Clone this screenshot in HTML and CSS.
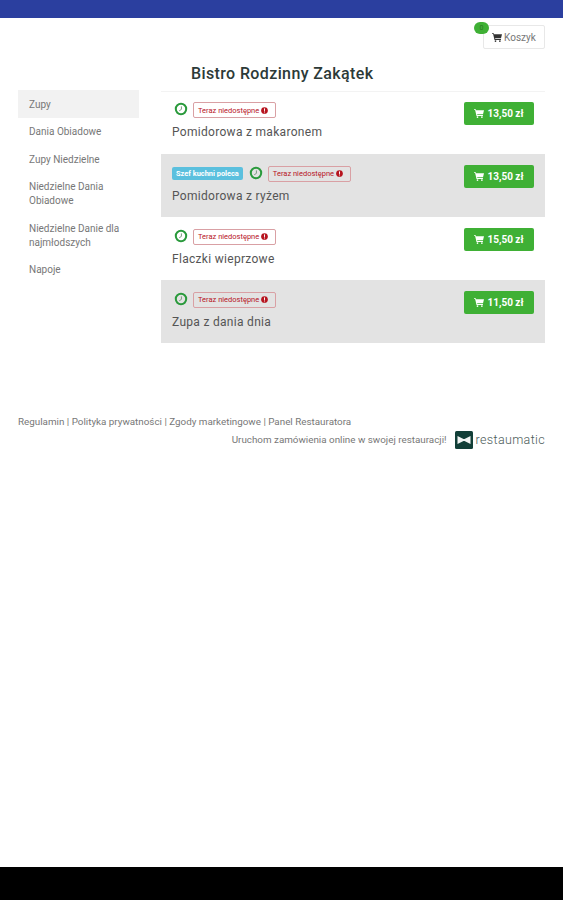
FILE: index.html
```html
<!DOCTYPE html>
<html lang="pl">
<head>
    <meta charset="UTF-8">
    <meta name="viewport" content="width=device-width, initial-scale=1.0">
    <title>Bistro Rodzinny Zakątek</title>
    <link rel="stylesheet" href="styles.css">
</head>
<body>
    <svg class="icon-defs" width="0" height="0">
        <symbol id="cart" viewBox="0 0 16 14">
            <path d="M0 0h2.8l.5 1.6H16l-1.6 6.6H5l.3 1.3h9v1.4H4L1.8 1.4H0z"/>
            <circle cx="5.6" cy="12.6" r="1.4"/>
            <circle cx="12.6" cy="12.6" r="1.4"/>
        </symbol>
        <symbol id="clock" viewBox="0 0 14 14">
            <circle cx="7" cy="7" r="5.2" fill="none" stroke="#2a9a3c" stroke-width="2"/>
            <path d="M7.4 4.4V7.4L5.2 8.8" fill="none" stroke="#7a9a80" stroke-width="1"/>
        </symbol>
        <symbol id="alert" viewBox="0 0 10 10">
            <circle cx="5" cy="5" r="4.8" fill="#b7141f"/>
            <rect x="4.3" y="2" width="1.4" height="3.6" fill="#fff"/>
            <rect x="4.3" y="6.4" width="1.4" height="1.4" fill="#fff"/>
        </symbol>
    </svg>

    <div class="top-bar"></div>

    <div class="page">
        <div class="cart-row">
            <a class="cart-btn" href="#">
                <span class="cart-count">0</span>
                <svg class="cart-icon"><use href="#cart"/></svg>Koszyk
            </a>
        </div>

        <h1 class="title">Bistro Rodzinny Zakątek</h1>

        <div class="content">
            <ul class="side-menu">
                <li class="active">Zupy</li>
                <li>Dania Obiadowe</li>
                <li>Zupy Niedzielne</li>
                <li>Niedzielne Dania Obiadowe</li>
                <li>Niedzielne Danie dla najmłodszych</li>
                <li>Napoje</li>
            </ul>

            <div class="dishes">
                <div class="dish">
                    <div class="dish-info">
                        <div class="dish-tags">
                            <svg class="clock"><use href="#clock"/></svg>
                            <span class="unavailable">Teraz niedostępne <svg class="alert"><use href="#alert"/></svg></span>
                        </div>
                        <div class="dish-name">Pomidorowa z makaronem</div>
                    </div>
                    <a class="price-btn" href="#"><svg class="cart-icon"><use href="#cart"/></svg>13,50 zł</a>
                </div>
                <div class="dish">
                    <div class="dish-info">
                        <div class="dish-tags">
                            <span class="chef">Szef kuchni poleca</span>
                            <svg class="clock"><use href="#clock"/></svg>
                            <span class="unavailable">Teraz niedostępne <svg class="alert"><use href="#alert"/></svg></span>
                        </div>
                        <div class="dish-name">Pomidorowa z ryżem</div>
                    </div>
                    <a class="price-btn" href="#"><svg class="cart-icon"><use href="#cart"/></svg>13,50 zł</a>
                </div>
                <div class="dish">
                    <div class="dish-info">
                        <div class="dish-tags">
                            <svg class="clock"><use href="#clock"/></svg>
                            <span class="unavailable">Teraz niedostępne <svg class="alert"><use href="#alert"/></svg></span>
                        </div>
                        <div class="dish-name">Flaczki wieprzowe</div>
                    </div>
                    <a class="price-btn" href="#"><svg class="cart-icon"><use href="#cart"/></svg>15,50 zł</a>
                </div>
                <div class="dish">
                    <div class="dish-info">
                        <div class="dish-tags">
                            <svg class="clock"><use href="#clock"/></svg>
                            <span class="unavailable">Teraz niedostępne <svg class="alert"><use href="#alert"/></svg></span>
                        </div>
                        <div class="dish-name">Zupa z dania dnia</div>
                    </div>
                    <a class="price-btn" href="#"><svg class="cart-icon"><use href="#cart"/></svg>11,50 zł</a>
                </div>
            </div>
        </div>

        <div class="footer">
            <div class="footer-links">Regulamin | Polityka prywatności | Zgody marketingowe | Panel Restauratora</div>
            <div class="footer-brand">
                <span>Uruchom zamówienia online w swojej restauracji!</span>
                <svg class="logo" viewBox="0 0 18 18">
                    <rect width="18" height="18" rx="1.5" fill="#123f38"/>
                    <path d="M2.5 5l6 3h1l6-3v8l-6-3h-1l-6 3z" fill="#f2f5f4"/>
                </svg>
                <span class="logo-text">restaumatic</span>
            </div>
        </div>
    </div>

    <div class="bottom-bar"></div>
</body>
</html>
```

FILE: styles.css
```css
* {
    box-sizing: border-box;
}

body {
    font-family: Roboto, Arial, sans-serif;
    margin: 0;
    height: 900px;
    display: flex;
    flex-direction: column;
    background: white;
    color: #555;
    overflow: hidden;
}

.icon-defs {
    position: absolute;
}

.top-bar {
    height: 18px;
    background: #2b3f9f;
}

.bottom-bar {
    height: 33px;
    background: black;
}

.page {
    flex: 1;
    padding: 7px 18px 0;
}

.cart-row {
    display: flex;
    justify-content: flex-end;
}

.cart-btn {
    position: relative;
    display: flex;
    align-items: center;
    justify-content: center;
    gap: 2px;
    width: 62px;
    height: 24px;
    border: 1px solid #e8e8e8;
    border-radius: 2px;
    font-size: 10px;
    color: #777;
    text-decoration: none;
}

.cart-btn .cart-icon {
    width: 10px;
    height: 9px;
    fill: #333;
}

.cart-count {
    position: absolute;
    top: -4px;
    left: -10px;
    width: 15px;
    height: 12px;
    border-radius: 6px;
    background: #3fb035;
    color: #2a7a25;
    font-size: 7px;
    line-height: 12px;
    text-align: center;
}

.title {
    margin: 16px 0 8px 173px;
    font-size: 16px;
    font-weight: 500;
    line-height: 18px;
    letter-spacing: 0.38px;
    color: #2c3a38;
}

.content {
    display: flex;
    align-items: flex-start;
    gap: 22px;
}

.side-menu {
    width: 121px;
    flex: none;
    margin: -1px 0 0;
    padding: 0;
    list-style: none;
    font-size: 10px;
    line-height: 14px;
    color: #777;
}

.side-menu li {
    padding: 7.5px 11px 6px;
}

.side-menu .active {
    background: #f2f2f2;
}

.dishes {
    flex: 1;
    border-top: 1px solid #f3f3f3;
}

.dish {
    display: flex;
    justify-content: space-between;
    height: 63px;
    padding: 12px 11px 0;
}

.dish:first-child {
    height: 61.5px;
    padding-top: 10px;
}

.dish:nth-child(even) {
    background: #e3e3e3;
}

.dish-tags {
    display: flex;
    align-items: center;
    gap: 5px;
    height: 16px;
    padding-left: 2px;
}

.dish:nth-child(2) .dish-tags {
    padding-left: 0;
}

.clock {
    width: 14px;
    height: 14px;
    margin-top: -2px;
}

.unavailable {
    display: flex;
    align-items: center;
    gap: 2px;
    height: 16px;
    padding: 0 7px 0 4px;
    border: 1px solid #d9a0a4;
    border-radius: 2px;
    font-size: 7.5px;
    white-space: nowrap;
    color: #b7141f;
}

.alert {
    width: 7px;
    height: 7px;
}

.chef {
    height: 13px;
    margin-right: 1px;
    padding: 0 4px;
    border-radius: 2px;
    background: #5bc0de;
    color: white;
    font-size: 7.4px;
    font-weight: 700;
    line-height: 13px;
    white-space: nowrap;
}

.dish-name {
    margin-top: 7px;
    font-size: 12px;
    line-height: 14px;
    letter-spacing: 0.3px;
    color: #555;
}

.price-btn {
    display: flex;
    align-items: center;
    justify-content: center;
    gap: 3px;
    width: 70px;
    height: 23px;
    margin-top: -1px;
    border-radius: 2px;
    background: #3fb035;
    color: white;
    font-size: 10px;
    font-weight: 700;
    text-decoration: none;
}

.dish:first-child .price-btn {
    margin-top: 0;
}

.price-btn .cart-icon {
    width: 10px;
    height: 9px;
    fill: white;
}

.footer {
    margin-top: 72px;
    font-size: 9.83px;
    line-height: 14px;
    color: #777;
}

.footer-brand {
    display: flex;
    align-items: center;
    justify-content: flex-end;
    gap: 3px;
    margin-top: 2px;
}

.logo {
    width: 18px;
    height: 18px;
    margin-left: 5px;
}

.logo-text {
    font-size: 12.5px;
    font-weight: 300;
    letter-spacing: 0.35px;
    color: #4a5a58;
}
```
